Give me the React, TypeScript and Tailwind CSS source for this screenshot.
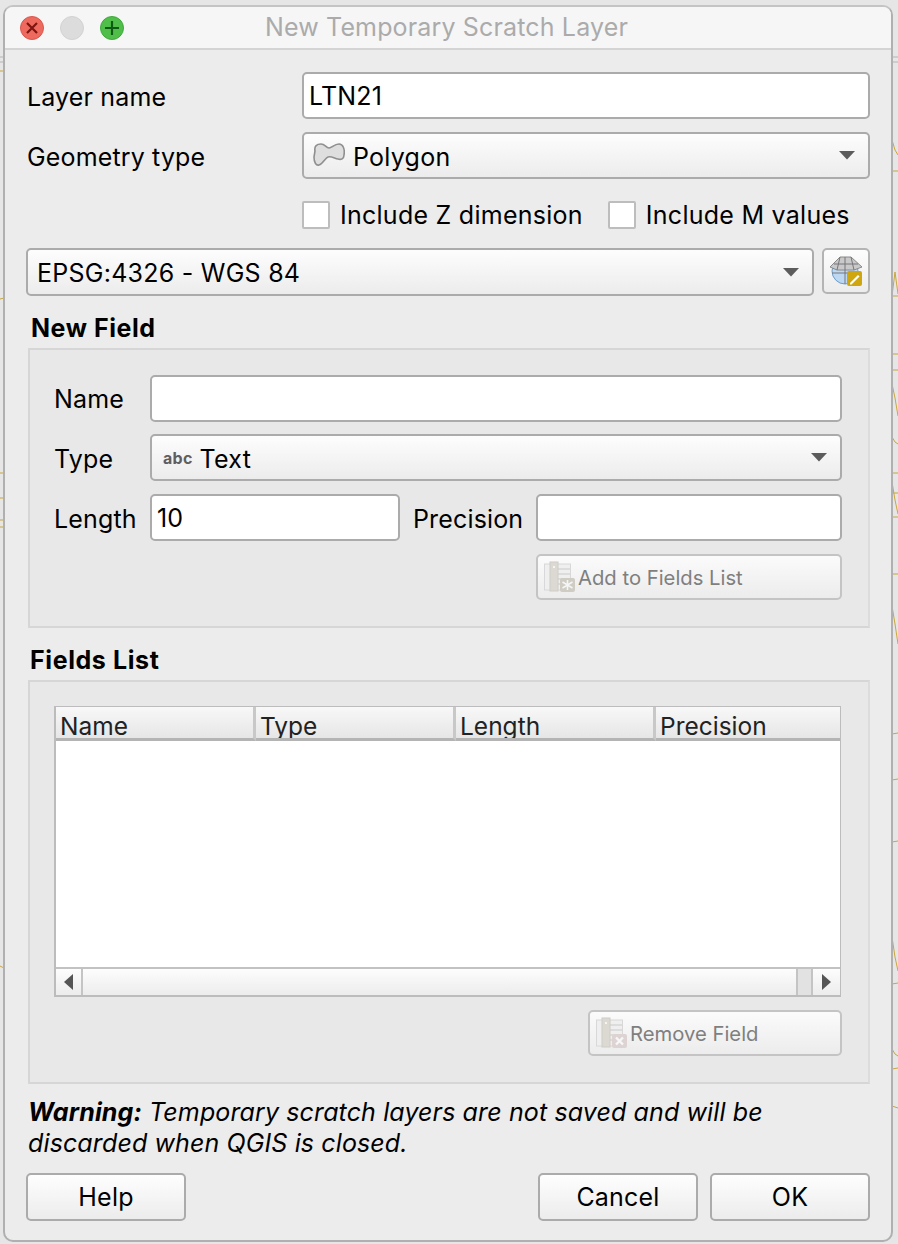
const sans = "font-['Inter','Liberation_Sans',Arial,sans-serif]";

function Chevron({ className = "" }: { className?: string }) {
  return (
    <svg width="16" height="9" viewBox="0 0 16 9" className={className}>
      <polygon points="0,0 16,0 8,8.5" fill="#5c5c5c" />
    </svg>
  );
}

function Input({ value = "", className = "" }: { value?: string; className?: string }) {
  return (
    <div className={`h-[47px] rounded-[5px] border-2 border-[#ababab] bg-white pl-[5px] text-[25px] leading-[44px] tracking-[0.2px] text-black ${className}`}>
      {value}
    </div>
  );
}

function Combo({ children, className = "" }: { children: React.ReactNode; className?: string }) {
  return (
    <div className={`flex h-[47px] items-center justify-between rounded-[5px] border-2 border-[#ababab] bg-gradient-to-b from-[#fdfdfd] to-[#ececec] pl-[9px] pr-[13px] text-[25px] tracking-[0.25px] text-black ${className}`}>
      <div className="flex items-center pt-[4px]">{children}</div>
      <Chevron />
    </div>
  );
}

function Check({ label, className = "" }: { label: string; className?: string }) {
  return (
    <div className={`flex items-center gap-[10px] ${className}`}>
      <div className="h-[28px] w-[28px] rounded-[2px] border-2 border-[#bdbdbd] bg-white" />
      <span className="text-[25px] leading-[30px] tracking-[0.26px]">{label}</span>
    </div>
  );
}

function Label({ children, className = "" }: { children: React.ReactNode; className?: string }) {
  return <div className={`text-[25px] leading-[30px] tracking-[0.15px] text-black ${className}`}>{children}</div>;
}

function Btn({ children, className = "" }: { children: React.ReactNode; className?: string }) {
  return (
    <div className={`flex h-[48px] w-[160px] items-center justify-center rounded-[5px] border-2 border-[#ababab] bg-gradient-to-b from-[#fefefe] to-[#ececec] pt-[2px] text-[25px] tracking-[0.2px] text-black ${className}`}>
      {children}
    </div>
  );
}

function FieldIcon({ badge }: { badge: "add" | "remove" }) {
  return (
    <svg width="32" height="32" viewBox="0 0 32 32">
      <rect x="0.5" y="3" width="26" height="26" fill="#efefef" stroke="#d8d8d8" />
      <path d="M11 8h15M11 13h15M11 18h15M11 23h15" stroke="#dcdcdc" strokeWidth="2" />
      <rect x="6" y="1" width="8" height="29" fill="#dcd9d2" stroke="#cfccc5" />
      <rect x="9" y="5" width="2" height="2" fill="#f4f4f4" />
      {badge === "add" ? (
        <g>
          <rect x="16" y="17" width="15" height="14" rx="2" fill="#cfccc3" />
          <path d="M23.500 19v10M18.500 21l10 6M28.500 21l-10 6" stroke="#f5f5f5" strokeWidth="1.600" />
        </g>
      ) : (
        <g>
          <rect x="16" y="17" width="15" height="14" rx="2" fill="#ddd3d3" />
          <path d="M20 20.500l7 7M27 20.500l-7 7" stroke="#f7f7f7" strokeWidth="2.400" />
        </g>
      )}
    </svg>
  );
}

function DisabledBtn({ badge, label, className = "" }: { badge: "add" | "remove"; label: string; className?: string }) {
  return (
    <div className={`flex h-[46px] items-center rounded-[5px] border-2 border-[#c4c4c4] bg-gradient-to-b from-[#fbfbfb] to-[#ececec] pl-[6px] text-[20.25px] text-[#7f7f7f] ${className}`}>
      <FieldIcon badge={badge} />
      <span className="ml-[2px] pt-[2px]">{label}</span>
    </div>
  );
}

function GroupBox({ children, className = "" }: { children: React.ReactNode; className?: string }) {
  return (
    <div className={`ml-[23px] w-[842px] border-2 border-[#d6d6d6] border-r-[#dcdcdc] bg-[#e8e8e8] ${className}`}>
      {children}
    </div>
  );
}

function HeaderCell({ label, last = false }: { label: string; last?: boolean }) {
  return (
    <div className={`flex h-[34px] items-end overflow-hidden border-b-[3px] border-[#b4b4b4] bg-gradient-to-b from-[#f8f8f8] to-[#e6e6e6] pl-[4px] text-[24.5px] leading-[24px] text-[#222] ${last ? "flex-1" : "w-[200px] border-r-[3px] border-r-[#c8c8c8]"}`}>
      {label}
    </div>
  );
}

export default function App() {
  return (
    <div className={`relative h-[1244px] w-[898px] overflow-hidden bg-[#e6e6e6] ${sans}`}>
      <svg className="absolute inset-0" width="898" height="1244" viewBox="0 0 898 1244" fill="none">
        <path d="M0 57h4M0 62h4M892 57h6M892 62h6" stroke="#b4b4b4" strokeWidth="1" />
        <path d="M0 71h4M0 299l4-1M0 473h4M0 498h4M0 520h4M0 527h4M0 966l4 2" stroke="#c9a63c" strokeWidth="1" />
        <path d="M892 140l3 10 3 5M892 171h6M892 296l3-24 3 22M892 296h6M892 354h6M892 370h6M892 384l3 14 3 18M892 437l3 5 3 2M892 473h6M892 493h6M892 482l3 18 3 14M892 517h6M892 574h6M892 606l3 18 3 20M892 734l6-1M892 780l6-1M892 842l6-1M892 937l3 20 3 14M892 984l6-1M892 1049l3 5 3 2M892 1069l6-1M892 1106l6 2"
          stroke="#c9a63c" strokeWidth="1" />
      </svg>
      <div className="relative ml-[3px] mt-[5px] flex h-[1237px] w-[890px] flex-col overflow-hidden rounded-[10px] border-2 border-[#b0b0b0] border-t-[#c4c4c4] bg-[#ececec]">
        <div className="flex h-[43px] shrink-0 items-center border-b-2 border-[#d4d4d4] bg-[#f6f6f6]">
          <div className="ml-[15px] flex items-center gap-[16px]">
            <svg width="24" height="24" viewBox="0 0 24 24">
              <circle cx="12" cy="12" r="11.500" fill="#ee6a5f" stroke="#d9574e" />
              <path d="M7 7l10 10M17 7L7 17" stroke="#7c1510" strokeWidth="2.200" />
            </svg>
            <svg width="24" height="24" viewBox="0 0 24 24">
              <circle cx="12" cy="12" r="11.500" fill="#dcdcdc" stroke="#d2d2d2" />
            </svg>
            <svg width="24" height="24" viewBox="0 0 24 24">
              <circle cx="12" cy="12" r="11.500" fill="#4fbf4a" stroke="#42a83e" />
              <path d="M12 5v14M5 12h14" stroke="#0f5a12" strokeWidth="2.200" />
            </svg>
          </div>
          <div className="ml-[141px] pt-[1px] text-[25px] tracking-[0.15px] text-[#ababab]">New Temporary Scratch Layer</div>
        </div>

        <div className="mt-[22px] flex items-center">
          <Label className="ml-[22px] w-[275px] pt-[2px]">Layer name</Label>
          <Input value="LTN21" className="w-[568px]" />
        </div>
        <div className="mt-[13px] flex items-center">
          <Label className="ml-[22px] w-[275px] pt-[2px]">Geometry type</Label>
          <Combo className="w-[568px]">
            <svg width="32" height="24" viewBox="0 0 32 24" className="-mt-[6px] mr-[8px]">
              <path d="M2 8C1 3 4 1 8 1c4 0 5 4 8 4s5-4 10-4c4 0 6 5 5 11 0 4-3 5-6 4-4-1-7-3-10-2s-5 7-9 8c-3 1-5-3-5-8z" fill="#dedede" stroke="#8f8f8f" strokeWidth="1.600" />
            </svg>
            <span>Polygon</span>
          </Combo>
        </div>
        <div className="mt-[21px] flex items-center pl-[297px]">
          <Check label="Include Z dimension" />
          <Check label="Include M values" className="ml-[25px]" />
        </div>
        <div className="mt-[18px] flex items-start">
          <Combo className="ml-[21px] h-[48px] w-[788px]">EPSG:4326 - WGS 84</Combo>
          <div className="ml-[8px] flex h-[46px] w-[48px] items-center justify-center rounded-[5px] border-2 border-[#b4b4b4] bg-gradient-to-b from-[#fdfdfd] to-[#ececec]">
            <svg width="34" height="32" viewBox="0 0 34 32">
              <circle cx="16" cy="16" r="13" fill="#bcd8f2" stroke="#6f9cc9" />
              <path d="M1 12L11 2h11l11 10-8 3H8z" fill="#c9c9c9" stroke="#8a8a8a" />
              <path d="M11 2L8 15M22 2l3 13M16 2v13M5 9h24M3 18h24M16 15v14" stroke="#77777a" strokeWidth="1" />
              <rect x="18" y="16" width="15" height="15" rx="2" fill="#d0a60e" />
              <path d="M21 28l8-8 1.500 1.500-8 8H21z" fill="#fff" />
            </svg>
          </div>
        </div>

        <div className="ml-[26px] mt-[17px] text-[25px] font-bold leading-[30px] tracking-[0.55px] text-black">New Field</div>
        <GroupBox className="mt-[5px] h-[280px]">
          <div className="mt-[25px] flex items-center">
            <Label className="ml-[24px] w-[96px]">Name</Label>
            <Input className="w-[692px]" />
          </div>
          <div className="mt-[12px] flex items-center">
            <Label className="ml-[24px] w-[96px] pt-[2px]">Type</Label>
            <Combo className="w-[692px] pl-[11px]">
              <span className="-mt-[4px] mr-[7px] text-[16px] font-bold leading-none text-[#5f5f5f]">abc</span>
              <span>Text</span>
            </Combo>
          </div>
          <div className="mt-[13px] flex items-center">
            <Label className="ml-[24px] w-[96px] pt-[2px]">Length</Label>
            <Input value="10" className="w-[250px]" />
            <Label className="ml-[13px] w-[123px] pt-[2px]">Precision</Label>
            <Input className="w-[306px]" />
          </div>
          <DisabledBtn badge="add" label="Add to Fields List" className="ml-[506px] mt-[13px] w-[306px]" />
        </GroupBox>

        <div className="ml-[25px] mt-[17px] text-[25px] font-bold leading-[30px] tracking-[0.6px] text-black">Fields List</div>
        <GroupBox className="mt-[5px] h-[404px]">
          <div className="ml-[24px] mt-[24px] flex h-[291px] w-[787px] flex-col border-2 border-[#bcbcbc] border-r-[1px] border-t-[1px] bg-white">
            <div className="flex h-[34px] shrink-0">
              <HeaderCell label="Name" />
              <HeaderCell label="Type" />
              <HeaderCell label="Length" />
              <HeaderCell label="Precision" last />
            </div>
            <div className="flex-1 border-b-2 border-[#c2c2c2] bg-white" />
            <div className="flex h-[26px] shrink-0 bg-gradient-to-b from-[#fdfdfd] to-[#ececec]">
              <div className="flex w-[27px] items-center justify-center border-r-2 border-[#c4c4c4]">
                <svg width="9" height="16" viewBox="0 0 9 16"><polygon points="9,0 9,16 0,8" fill="#555" /></svg>
              </div>
              <div className="flex-1" />
              <div className="w-[17px] border-x-2 border-[#c4c4c4] bg-[#e2e2e2]" />
              <div className="flex w-[27px] items-center justify-center">
                <svg width="9" height="16" viewBox="0 0 9 16"><polygon points="0,0 0,16 9,8" fill="#555" /></svg>
              </div>
            </div>
          </div>
          <DisabledBtn badge="remove" label="Remove Field" className="ml-[558px] mt-[13px] w-[254px]" />
        </GroupBox>

        <div className="ml-[23px] mt-[13px] text-[25px] italic leading-[31px] tracking-[0.12px] text-black">
          <span className="font-bold">Warning:</span> Temporary scratch layers are not saved and will be
          <br />
          discarded when QGIS is closed.
        </div>

        <div className="ml-[21px] mt-[14px] flex w-[844px] items-center">
          <Btn>Help</Btn>
          <Btn className="ml-auto">Cancel</Btn>
          <Btn className="ml-[12px] border-[#62a0ea] to-[#e3e7ef]">OK</Btn>
        </div>
      </div>
    </div>
  );
}
